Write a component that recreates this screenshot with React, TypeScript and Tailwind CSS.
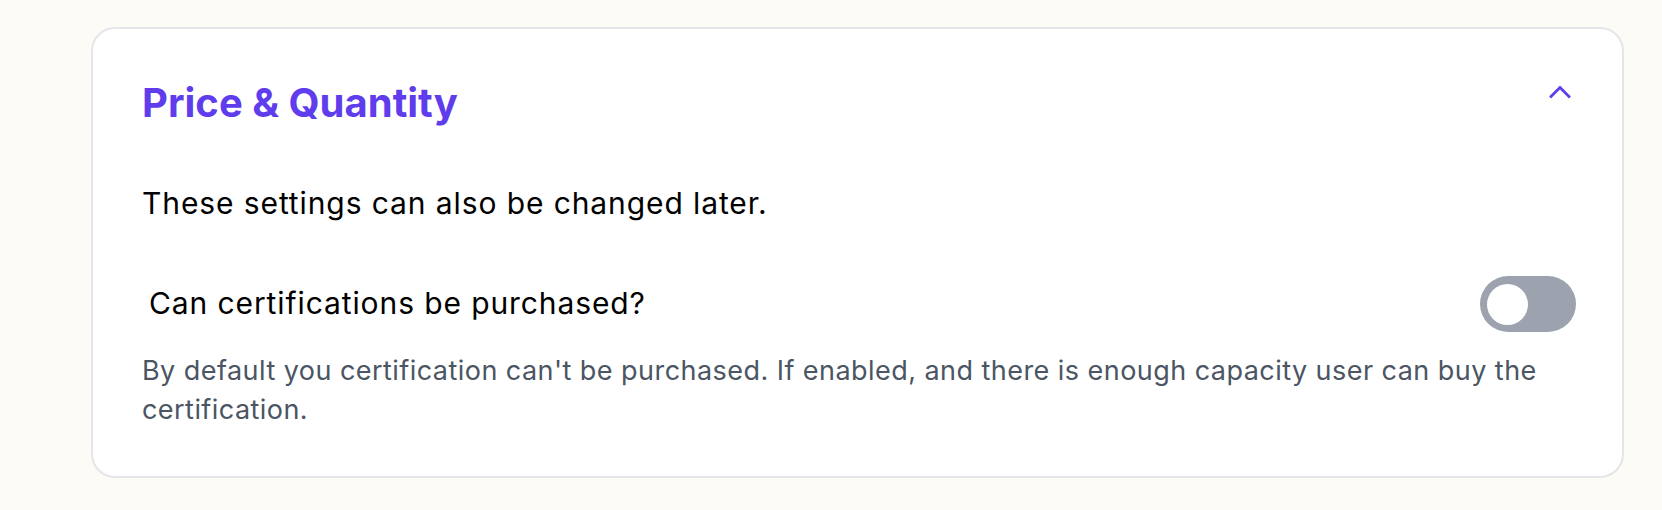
import * as React from "react";

const ChevronUp: React.FC = () => (
  <svg width="24" height="24" viewBox="0 0 24 24" fill="none" aria-hidden="true">
    <path
      d="M3 16.5 12 7.5l9 9"
      stroke="#5f3ded"
      strokeWidth="2.7"
      strokeLinecap="square"
      strokeLinejoin="miter"
    />
  </svg>
);

const Toggle: React.FC<{ on: boolean; onChange: (v: boolean) => void }> = ({
  on,
  onChange,
}) => (
  <button
    type="button"
    role="switch"
    aria-checked={on}
    onClick={() => onChange(!on)}
    className={`flex h-[56px] w-[96px] shrink-0 items-center rounded-full px-[7px] ${
      on ? "justify-end bg-[#5f3ded]" : "justify-start bg-[#9ca3af]"
    }`}
  >
    <span className="block h-[41px] w-[41px] rounded-full bg-white" />
  </button>
);

export default function App() {
  const [open, setOpen] = React.useState(true);
  const [purchasable, setPurchasable] = React.useState(false);

  return (
    <div
      className="min-h-screen bg-[#fcfbf6] pl-[91px] pr-[38px] pt-[27px]"
      style={{ fontFamily: "Inter, 'Noto Sans', sans-serif" }}
    >
      <section className="rounded-[24px] border-2 border-[#e5e5ea] bg-white pb-[47px] pl-[49px] pr-[46px] pt-[48px]">
        <div className="flex items-start justify-between">
          <h2 className="text-[40px] font-bold leading-[52px] text-[#5f3ded]">
            Price &amp; Quantity
          </h2>
          <button
            type="button"
            onClick={() => setOpen(!open)}
            className="mr-[4px] mt-[3px]"
          >
            <ChevronUp />
          </button>
        </div>

        {open && (
          <>
            <p className="mt-[54px] text-[30px] leading-[40px] tracking-[0.9px] text-black">
              These settings can also be changed later.
            </p>

            <div className="mt-[53px] flex items-center justify-between">
              <span className="ml-[7px] -translate-y-[1px] text-[30px] leading-[40px] tracking-[0.9px] text-black">
                Can certifications be purchased?
              </span>
              <Toggle on={purchasable} onChange={setPurchasable} />
            </div>

            <p className="mt-[19px] text-[27px] leading-[39px] tracking-[0.45px] text-[#4b5563]">
              By default you certification can't be purchased. If enabled, and
              there is enough capacity user can buy the certification.
            </p>
          </>
        )}
      </section>
    </div>
  );
}
